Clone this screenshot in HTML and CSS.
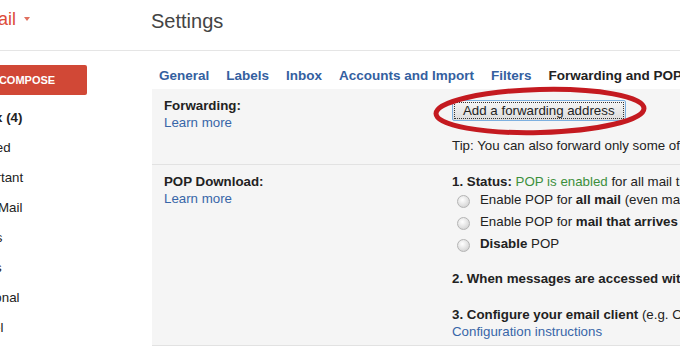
FILE: index.html
```html
<!DOCTYPE html>
<html lang="en">
<head>
    <meta charset="UTF-8">
    <meta name="viewport" content="width=device-width, initial-scale=1.0">
    <title>Gmail - Settings</title>
    <link rel="stylesheet" href="styles.css">
</head>
<body>
    <div class="app">
        <header class="topbar">
            <div class="brand"><span class="logo">Gmail</span><span class="caret"></span></div>
            <h1 class="title">Settings</h1>
        </header>

        <div class="main">
            <aside class="nav">
                <div class="compose">COMPOSE</div>
                <ul class="folders">
                    <li class="unread">Inbox (4)</li>
                    <li>Starred</li>
                    <li>Important</li>
                    <li>Sent Mail</li>
                    <li>Drafts</li>
                    <li>Notes</li>
                    <li>Personal</li>
                    <li>Travel</li>
                </ul>
            </aside>

            <section class="settings">
                <nav class="tabs">
                    <a class="tab">General</a>
                    <a class="tab">Labels</a>
                    <a class="tab">Inbox</a>
                    <a class="tab">Accounts and Import</a>
                    <a class="tab">Filters</a>
                    <span class="tab current">Forwarding and POP/IMAP</span>
                </nav>

                <div class="panel">
                    <div class="row forward">
                        <div class="label">Forwarding:<a class="link">Learn more</a></div>
                        <div class="value">
                            <button class="btn">Add a forwarding address</button>
                            <div class="tip">Tip: You can also forward only some of your mail by creating a filter!</div>
                        </div>
                        <!-- red marker drawn over the button -->
                        <svg class="marker" width="216" height="50" viewBox="0 0 216 50">
                            <ellipse cx="108" cy="25" rx="104" ry="21.5" transform="rotate(-1.5 108 25)"
                                     fill="none" stroke="#c41a20" stroke-width="5"/>
                        </svg>
                    </div>

                    <div class="row pop">
                        <div class="label">POP Download:<a class="link">Learn more</a></div>
                        <div class="value">
                            <div><b>1. Status:</b> <span class="on">POP is enabled</span> for all mail that has arrived since 3/14/13</div>
                            <ul class="choices">
                                <li><span class="radio"></span><span>Enable POP for <b>all mail</b> (even mail that's already been downloaded)</span></li>
                                <li><span class="radio"></span><span>Enable POP for <b>mail that arrives from now on</b></span></li>
                                <li><span class="radio"></span><span><b>Disable</b> POP</span></li>
                            </ul>
                            <div class="step2"><b>2. When messages are accessed with POP</b></div>
                            <div class="step3"><b>3. Configure your email client</b> (e.g. Outlook, Eudora, Netscape Mail)</div>
                            <a class="link">Configuration instructions</a>
                        </div>
                    </div>
                </div>
            </section>
        </div>
    </div>
</body>
</html>
```

FILE: styles.css
```css
body {
    margin: 0;
    overflow: hidden;
    background: #fff;
    color: #222;
    font-family: "Liberation Sans", Arial, sans-serif;
}
.app {
    width: 680px;
    height: 350px;
}

/* top bar */
.topbar {
    display: flex;
    align-items: flex-start;
    height: 51px;
    padding-top: 8px;
    box-sizing: border-box;
    border-bottom: 1px solid #e5e5e5;
}
.brand {
    width: 151px;
    flex-shrink: 0;
    font-size: 18px;
    line-height: 22px;
    color: #dd4b39;
}
.logo {
    display: inline-block;
    margin-left: -31px;
}
.caret {
    display: inline-block;
    margin-left: 8px;
    vertical-align: 4px;
    border-left: 3.5px solid transparent;
    border-right: 3.5px solid transparent;
    border-top: 4px solid #e0705f;
}
.title {
    margin: 1px 0 0;
    font-size: 20px;
    font-weight: normal;
    line-height: 24px;
    color: #444;
}

.main {
    display: flex;
}

/* left navigation */
.nav {
    width: 185px;
    margin-left: -33px;
    flex-shrink: 0;
}
.compose {
    width: 120px;
    height: 30px;
    margin-top: 14px;
    border-radius: 2px;
    background: #d14836;
    color: #fff;
    font-size: 11px;
    font-weight: bold;
    line-height: 30px;
    text-align: center;
}
.folders {
    list-style: none;
    margin: 8px 0 0;
    padding: 0;
    font-size: 13.3px;
    line-height: 30px;
}
.folders .unread {
    font-weight: bold;
}

/* settings */
.settings {
    flex: 1;
    white-space: nowrap;
    font-size: 13.3px;
}
.tabs {
    display: flex;
    height: 26px;
    margin: 12px 0 0 -1.5px;
    line-height: 26px;
    font-size: 13.5px;
    font-weight: bold;
}
.tab {
    padding: 0 8.5px;
    color: #34609f;
}
.tab.current {
    color: #222;
}
.panel {
    background: #f5f5f5;
}
.row {
    position: relative;
    display: grid;
    grid-template-columns: 288px auto;
    padding: 8px 0 0 12px;
    line-height: 17px;
    border-bottom: 1px solid #e2e2e2;
}
.row.forward {
    height: 67px;
}
.row.pop {
    height: 172px;
}
.label {
    font-weight: bold;
}
.link {
    display: block;
    font-weight: normal;
    color: #3866a8;
}
.btn {
    display: block;
    height: 21px;
    margin-top: 3px;
    padding: 0 10px;
    border: 1px solid #7db0e0;
    border-radius: 2px;
    background: linear-gradient(#f6f6f6, #dcdcdc);
    outline: 1px dotted #333;
    outline-offset: -3px;
    font-family: "Liberation Sans", Arial, sans-serif;
    font-size: 13.3px;
    color: #222;
}
.tip {
    margin-top: 16px;
}
.marker {
    position: absolute;
    left: 280px;
    top: -3px;
    overflow: visible;
}
.on {
    color: #3c8f3c;
}
.choices {
    list-style: none;
    margin: -2px 0 0;
    padding: 0;
}
.choices li {
    display: flex;
    align-items: center;
    height: 22px;
}
.radio {
    width: 11px;
    height: 11px;
    margin: 5px 10px 0 5px;
    border: 1px solid #b4b4b4;
    border-radius: 50%;
    background: radial-gradient(circle at 40% 35%, #fff, #dcdcdc 65%, #c4c4c4);
}
.step2 {
    margin-top: 16px;
}
.step3 {
    margin-top: 19px;
}
```
